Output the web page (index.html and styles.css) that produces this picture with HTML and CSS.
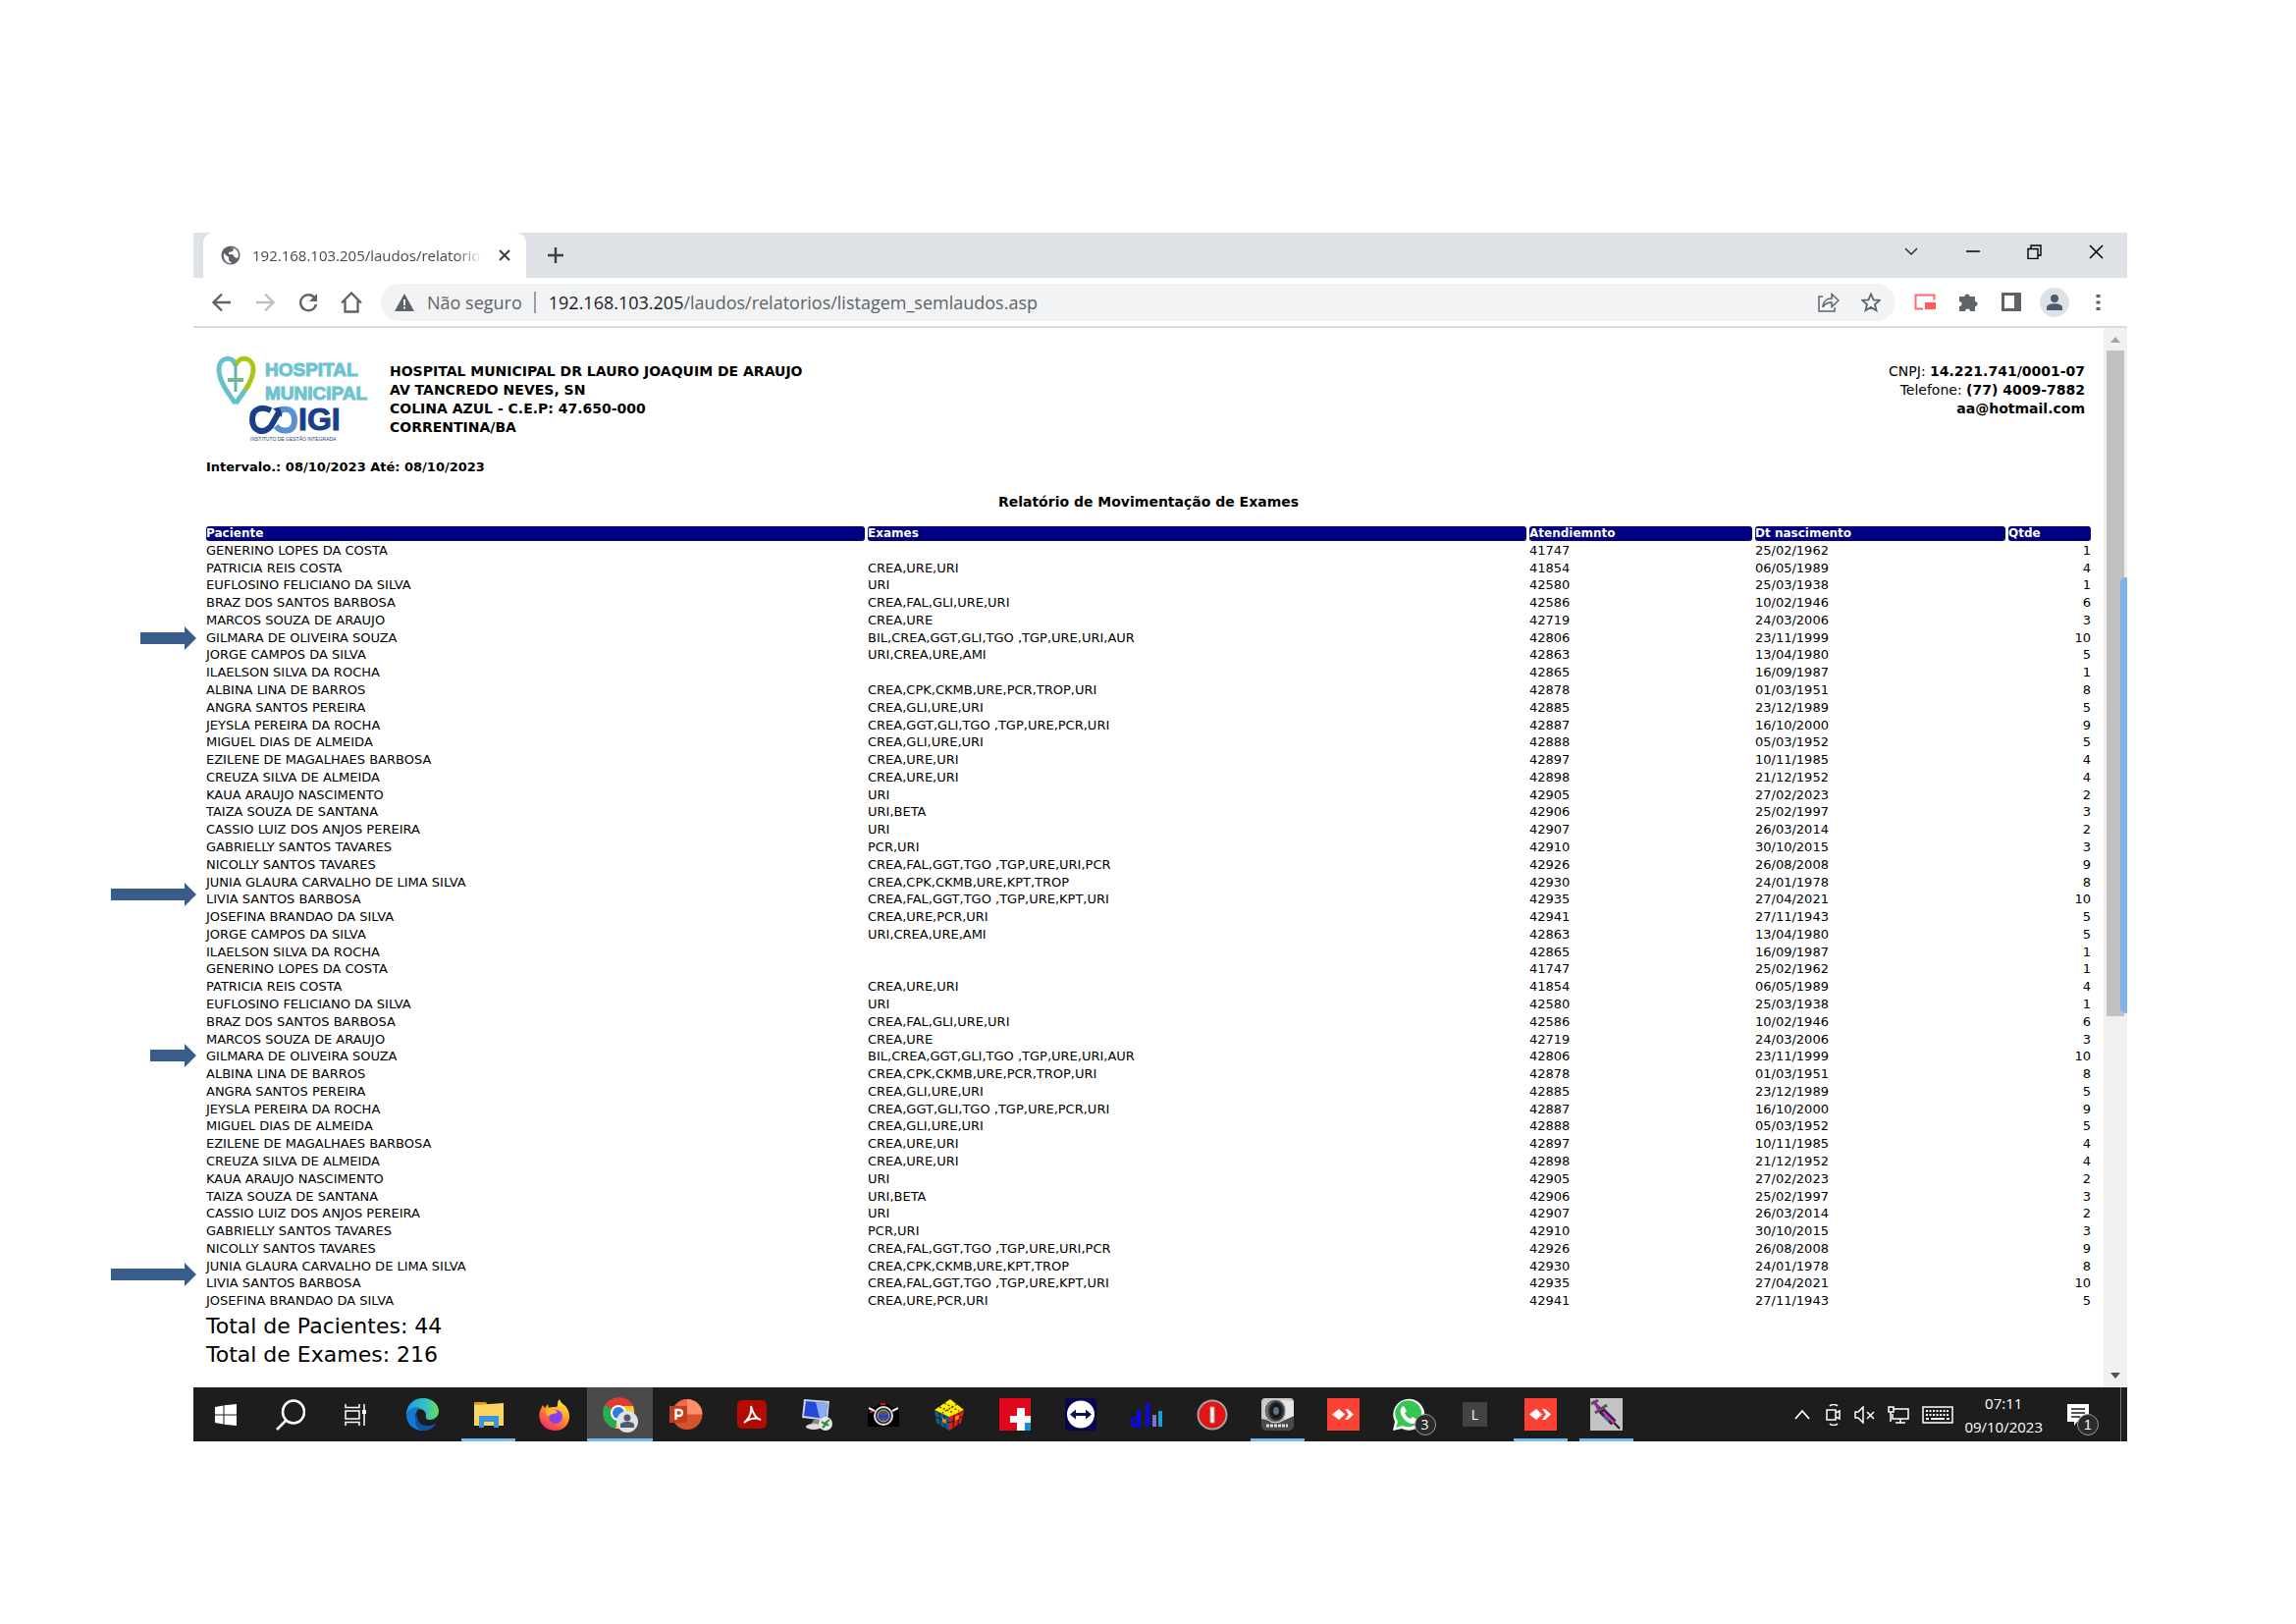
FILE: index.html
```html
<!DOCTYPE html>
<html lang="pt-BR">
<head>
<meta charset="utf-8">
<title>192.168.103.205/laudos/relatorios/listagem_semlaudos.asp</title>
<link rel="stylesheet" href="styles.css">
</head>
<body>
<main class="window">
  <div class="tabstrip">
    <div class="tab">
      <svg width="20" height="20" viewBox="0 0 20 20"><circle cx="10" cy="10" r="9.5" fill="#5f6368"/><path d="M3 8l5 4v3l3 3c-5 1-9-4-8-10zM9 2l4 1-1 3-4 1v2h4l2 3 3 1c3-6-2-11-8-11z" fill="#fff"/></svg>
      <span class="tab-title">192.168.103.205/laudos/relatorio</span>
      <button class="icon-btn tab-close" aria-label="Fechar guia"><svg width="12" height="12" viewBox="0 0 12 12"><path d="M1 1l10 10M11 1L1 11" stroke="#3c4043" stroke-width="2"/></svg></button>
    </div>
    <button class="icon-btn new-tab" aria-label="Nova guia"><svg width="16" height="16" viewBox="0 0 16 16"><path d="M8 0v16M0 8h16" stroke="#3c4043" stroke-width="2.4"/></svg></button>
    <div class="controls">
      <button class="icon-btn" aria-label="Pesquisar guias"><svg width="14" height="10" viewBox="0 0 14 10"><path d="M1 2l6 6 6-6" fill="none" stroke="#333" stroke-width="1.5"/></svg></button>
      <button class="icon-btn" aria-label="Minimizar"><svg width="14" height="4" viewBox="0 0 14 4"><path d="M0 2h14" stroke="#000" stroke-width="1.5"/></svg></button>
      <button class="icon-btn" aria-label="Restaurar"><svg width="15" height="15" viewBox="0 0 15 15"><path d="M1 4.500h10v10H1zM4 4V1h10v10h-3" fill="none" stroke="#000" stroke-width="1.400"/></svg></button>
      <button class="icon-btn" aria-label="Fechar"><svg width="15" height="15" viewBox="0 0 15 15"><path d="M1 1l13 13M14 1L1 14" stroke="#000" stroke-width="1.500"/></svg></button>
    </div>
  </div>

  <div class="toolbar">
    <div class="nav">
      <button class="icon-btn" aria-label="Voltar"><svg width="20" height="20" viewBox="0 0 20 20"><path d="M19 10H2M10 1.500L1.500 10 10 18.500" fill="none" stroke="#5f6368" stroke-width="2.400"/></svg></button>
      <button class="icon-btn" aria-label="Avançar"><svg width="20" height="20" viewBox="0 0 20 20"><path d="M1 10h17M10 1.500l8.500 8.500L10 18.500" fill="none" stroke="#bdbec0" stroke-width="2.400"/></svg></button>
      <button class="icon-btn" aria-label="Recarregar"><svg width="20" height="20" viewBox="0 0 20 20"><path d="M17 6A8 8 0 1 0 18 12" fill="none" stroke="#5f6368" stroke-width="2.400"/><path d="M19 1v8h-8z" fill="#5f6368"/></svg></button>
      <button class="icon-btn" aria-label="Página inicial"><svg width="22" height="22" viewBox="0 0 22 22"><path d="M1 11.500L11 1.500l10 10M4.500 9v11.500h13V9" fill="none" stroke="#5f6368" stroke-width="2.300"/></svg></button>
    </div>
    <div class="omnibox">
      <svg width="20" height="18" viewBox="0 0 20 18"><path d="M10 0l10 18H0z" fill="#5f6368"/><path d="M10 6v6M10 13.500v2" stroke="#fff" stroke-width="1.800"/></svg>
      <span class="insecure">Não seguro</span>
      <span class="url"><b>192.168.103.205</b>/laudos/relatorios/listagem_semlaudos.asp</span>
      <button class="icon-btn" aria-label="Compartilhar"><svg width="22" height="20" viewBox="0 0 22 20"><path d="M5 4H1v15h16v-4" fill="none" stroke="#5f6368" stroke-width="1.500"/><path d="M5 15c0-6 4-9 9-9V1.500l7 6.500-7 6.500V10c-4 0-7 1-9 5z" fill="none" stroke="#5f6368" stroke-width="1.500"/></svg></button>
      <button class="icon-btn" aria-label="Favoritos"><svg width="20" height="20" viewBox="0 0 20 20"><path d="M10 1.500l2.500 5.800 6.300.6-4.800 4.100 1.500 6.200L10 14.900l-5.500 3.300L6 12 1.200 7.900l6.300-.6z" fill="none" stroke="#5f6368" stroke-width="1.800"/></svg></button>
    </div>
    <div class="extensions">
      <button class="icon-btn" aria-label="Picture in picture"><svg width="22" height="17" viewBox="0 0 22 17"><path d="M9 15.500H1.500v-14h19v5" fill="none" stroke="#ff6b68" stroke-width="2"/><path d="M11 9h11v7H11z" fill="#ff5b57"/></svg></button>
      <button class="icon-btn" aria-label="Extensões"><svg width="20" height="20" viewBox="0 0 20 20"><path d="M1 4h5.500a2.500 2.500 0 1 1 5 0H17v5a2.500 2.500 0 1 1 0 5v5h-5a2.500 2.500 0 1 0-5 0H1v-5a2.500 2.500 0 1 0 0-5z" fill="#5f6368"/></svg></button>
      <button class="icon-btn" aria-label="Painel lateral"><svg width="20" height="19" viewBox="0 0 20 19"><path d="M0 0h20v19H0zM3 3v13h10V3z" fill="#5f6368" fill-rule="evenodd"/></svg></button>
      <button class="icon-btn" aria-label="Perfil"><svg width="30" height="30" viewBox="0 0 30 30"><circle cx="15" cy="15" r="15" fill="#dee1e6"/><circle cx="15" cy="11" r="4" fill="#4e5a6e"/><path d="M7 23v-3c0-5 16-5 16 0v3z" fill="#4e5a6e"/></svg></button>
      <button class="icon-btn" aria-label="Menu"><svg width="5" height="18" viewBox="0 0 5 18"><path d="M.5 1h4v3h-4zM.5 7.500h4v3h-4zM.5 14h4v3h-4z" fill="#5f6368"/></svg></button>
    </div>
  </div>

  <div class="viewport">
    <article class="report">
      <header class="report-head">
        <svg class="logo" width="156" height="92" viewBox="0 0 156 92" role="img" aria-label="Hospital Municipal IGI">
          <path d="M20 49C12 38 3 26 3 14 3 2 17-1 20 10" fill="none" stroke="#69bfcc" stroke-width="5"/>
          <path d="M20 10C24-1 38 2 38 14c0 8-4 15-8 21" fill="none" stroke="#a9c712" stroke-width="5"/>
          <path d="M30 35L20 49" stroke="#69bfcc" stroke-width="5"/>
          <path d="M20 8v29" stroke="#5fb5ad" stroke-width="3"/><path d="M12 25h16" stroke="#6fb98c" stroke-width="4"/>
          <text class="logo-name" x="50" y="21">HOSPITAL</text>
          <text class="logo-name" x="50" y="45">MUNICIPAL</text>
          <path d="M56 56c-8-4-19-3-19 9s11 16 19 7l8-14" fill="none" stroke="#1b3f86" stroke-width="6"/>
          <path d="M58 54l10-2-1 11z" fill="#1b3f86"/>
          <path d="M61 72c5 6 19 8 19-6 0-10-7-13-14-10" fill="none" stroke="#5b90d3" stroke-width="6"/>
          <text class="logo-igi" x="84" y="76">IGI</text>
          <text class="logo-sub" x="35" y="87">INSTITUTO DE GESTÃO INTEGRADA</text>
        </svg>
        <address class="org">HOSPITAL MUNICIPAL DR LAURO JOAQUIM DE ARAUJO<br>AV TANCREDO NEVES, SN<br>COLINA AZUL - C.E.P: 47.650-000<br>CORRENTINA/BA</address>
        <address class="contact">CNPJ: <b>14.221.741/0001-07</b><br>Telefone: <b>(77) 4009-7882</b><br><b>aa@hotmail.com</b></address>
      </header>
      <p class="range">Intervalo.: 08/10/2023 Até: 08/10/2023</p>
      <h1 class="title">Relatório de Movimentação de Exames</h1>
      <table class="exams">
        <colgroup><col><col><col class="c-att"><col class="c-birth"><col class="c-qty"></colgroup>
        <thead><tr><th>Paciente</th><th>Exames</th><th>Atendiemnto</th><th>Dt nascimento</th><th>Qtde</th></tr></thead>
        <tbody>
          <tr><td>GENERINO LOPES DA COSTA</td><td></td><td>41747</td><td>25/02/1962</td><td>1</td></tr>
          <tr><td>PATRICIA REIS COSTA</td><td>CREA,URE,URI</td><td>41854</td><td>06/05/1989</td><td>4</td></tr>
          <tr><td>EUFLOSINO FELICIANO DA SILVA</td><td>URI</td><td>42580</td><td>25/03/1938</td><td>1</td></tr>
          <tr><td>BRAZ DOS SANTOS BARBOSA</td><td>CREA,FAL,GLI,URE,URI</td><td>42586</td><td>10/02/1946</td><td>6</td></tr>
          <tr><td>MARCOS SOUZA DE ARAUJO</td><td>CREA,URE</td><td>42719</td><td>24/03/2006</td><td>3</td></tr>
          <tr><td>GILMARA DE OLIVEIRA SOUZA</td><td>BIL,CREA,GGT,GLI,TGO ,TGP,URE,URI,AUR</td><td>42806</td><td>23/11/1999</td><td>10</td></tr>
          <tr><td>JORGE CAMPOS DA SILVA</td><td>URI,CREA,URE,AMI</td><td>42863</td><td>13/04/1980</td><td>5</td></tr>
          <tr><td>ILAELSON SILVA DA ROCHA</td><td></td><td>42865</td><td>16/09/1987</td><td>1</td></tr>
          <tr><td>ALBINA LINA DE BARROS</td><td>CREA,CPK,CKMB,URE,PCR,TROP,URI</td><td>42878</td><td>01/03/1951</td><td>8</td></tr>
          <tr><td>ANGRA SANTOS PEREIRA</td><td>CREA,GLI,URE,URI</td><td>42885</td><td>23/12/1989</td><td>5</td></tr>
          <tr><td>JEYSLA PEREIRA DA ROCHA</td><td>CREA,GGT,GLI,TGO ,TGP,URE,PCR,URI</td><td>42887</td><td>16/10/2000</td><td>9</td></tr>
          <tr><td>MIGUEL DIAS DE ALMEIDA</td><td>CREA,GLI,URE,URI</td><td>42888</td><td>05/03/1952</td><td>5</td></tr>
          <tr><td>EZILENE DE MAGALHAES BARBOSA</td><td>CREA,URE,URI</td><td>42897</td><td>10/11/1985</td><td>4</td></tr>
          <tr><td>CREUZA SILVA DE ALMEIDA</td><td>CREA,URE,URI</td><td>42898</td><td>21/12/1952</td><td>4</td></tr>
          <tr><td>KAUA ARAUJO NASCIMENTO</td><td>URI</td><td>42905</td><td>27/02/2023</td><td>2</td></tr>
          <tr><td>TAIZA SOUZA DE SANTANA</td><td>URI,BETA</td><td>42906</td><td>25/02/1997</td><td>3</td></tr>
          <tr><td>CASSIO LUIZ DOS ANJOS PEREIRA</td><td>URI</td><td>42907</td><td>26/03/2014</td><td>2</td></tr>
          <tr><td>GABRIELLY SANTOS TAVARES</td><td>PCR,URI</td><td>42910</td><td>30/10/2015</td><td>3</td></tr>
          <tr><td>NICOLLY SANTOS TAVARES</td><td>CREA,FAL,GGT,TGO ,TGP,URE,URI,PCR</td><td>42926</td><td>26/08/2008</td><td>9</td></tr>
          <tr><td>JUNIA GLAURA CARVALHO DE LIMA SILVA</td><td>CREA,CPK,CKMB,URE,KPT,TROP</td><td>42930</td><td>24/01/1978</td><td>8</td></tr>
          <tr><td>LIVIA SANTOS BARBOSA</td><td>CREA,FAL,GGT,TGO ,TGP,URE,KPT,URI</td><td>42935</td><td>27/04/2021</td><td>10</td></tr>
          <tr><td>JOSEFINA BRANDAO DA SILVA</td><td>CREA,URE,PCR,URI</td><td>42941</td><td>27/11/1943</td><td>5</td></tr>
          <tr><td>JORGE CAMPOS DA SILVA</td><td>URI,CREA,URE,AMI</td><td>42863</td><td>13/04/1980</td><td>5</td></tr>
          <tr><td>ILAELSON SILVA DA ROCHA</td><td></td><td>42865</td><td>16/09/1987</td><td>1</td></tr>
          <tr><td>GENERINO LOPES DA COSTA</td><td></td><td>41747</td><td>25/02/1962</td><td>1</td></tr>
          <tr><td>PATRICIA REIS COSTA</td><td>CREA,URE,URI</td><td>41854</td><td>06/05/1989</td><td>4</td></tr>
          <tr><td>EUFLOSINO FELICIANO DA SILVA</td><td>URI</td><td>42580</td><td>25/03/1938</td><td>1</td></tr>
          <tr><td>BRAZ DOS SANTOS BARBOSA</td><td>CREA,FAL,GLI,URE,URI</td><td>42586</td><td>10/02/1946</td><td>6</td></tr>
          <tr><td>MARCOS SOUZA DE ARAUJO</td><td>CREA,URE</td><td>42719</td><td>24/03/2006</td><td>3</td></tr>
          <tr><td>GILMARA DE OLIVEIRA SOUZA</td><td>BIL,CREA,GGT,GLI,TGO ,TGP,URE,URI,AUR</td><td>42806</td><td>23/11/1999</td><td>10</td></tr>
          <tr><td>ALBINA LINA DE BARROS</td><td>CREA,CPK,CKMB,URE,PCR,TROP,URI</td><td>42878</td><td>01/03/1951</td><td>8</td></tr>
          <tr><td>ANGRA SANTOS PEREIRA</td><td>CREA,GLI,URE,URI</td><td>42885</td><td>23/12/1989</td><td>5</td></tr>
          <tr><td>JEYSLA PEREIRA DA ROCHA</td><td>CREA,GGT,GLI,TGO ,TGP,URE,PCR,URI</td><td>42887</td><td>16/10/2000</td><td>9</td></tr>
          <tr><td>MIGUEL DIAS DE ALMEIDA</td><td>CREA,GLI,URE,URI</td><td>42888</td><td>05/03/1952</td><td>5</td></tr>
          <tr><td>EZILENE DE MAGALHAES BARBOSA</td><td>CREA,URE,URI</td><td>42897</td><td>10/11/1985</td><td>4</td></tr>
          <tr><td>CREUZA SILVA DE ALMEIDA</td><td>CREA,URE,URI</td><td>42898</td><td>21/12/1952</td><td>4</td></tr>
          <tr><td>KAUA ARAUJO NASCIMENTO</td><td>URI</td><td>42905</td><td>27/02/2023</td><td>2</td></tr>
          <tr><td>TAIZA SOUZA DE SANTANA</td><td>URI,BETA</td><td>42906</td><td>25/02/1997</td><td>3</td></tr>
          <tr><td>CASSIO LUIZ DOS ANJOS PEREIRA</td><td>URI</td><td>42907</td><td>26/03/2014</td><td>2</td></tr>
          <tr><td>GABRIELLY SANTOS TAVARES</td><td>PCR,URI</td><td>42910</td><td>30/10/2015</td><td>3</td></tr>
          <tr><td>NICOLLY SANTOS TAVARES</td><td>CREA,FAL,GGT,TGO ,TGP,URE,URI,PCR</td><td>42926</td><td>26/08/2008</td><td>9</td></tr>
          <tr><td>JUNIA GLAURA CARVALHO DE LIMA SILVA</td><td>CREA,CPK,CKMB,URE,KPT,TROP</td><td>42930</td><td>24/01/1978</td><td>8</td></tr>
          <tr><td>LIVIA SANTOS BARBOSA</td><td>CREA,FAL,GGT,TGO ,TGP,URE,KPT,URI</td><td>42935</td><td>27/04/2021</td><td>10</td></tr>
          <tr><td>JOSEFINA BRANDAO DA SILVA</td><td>CREA,URE,PCR,URI</td><td>42941</td><td>27/11/1943</td><td>5</td></tr>
        </tbody>
      </table>
      <p class="totals">Total de Pacientes: 44<br>Total de Exames: 216</p>
    </article>
    <div class="scrollbar">
      <svg width="10" height="6" viewBox="0 0 10 6"><path d="M5 0l5 6H0z" fill="#a3a3a3"/></svg>
      <div class="thumb"></div>
      <svg class="down" width="10" height="6" viewBox="0 0 10 6"><path d="M5 6l5-6H0z" fill="#505050"/></svg>
    </div>
    <div class="edge-handle"></div>
  </div>

  <footer class="taskbar">
    <div class="system">
      <button class="task" aria-label="Iniciar"><svg width="22" height="22" viewBox="0 0 22 22"><path d="M0 3l8.500-1.500v9H0zM9.500 1.300L22 0v10.500H9.500zM0 11.500h8.500v9L0 19zM9.500 11.500H22V22L9.500 20.700z" fill="#fff"/></svg></button>
      <button class="task" aria-label="Pesquisar"><svg width="30" height="32" viewBox="0 0 30 32"><ellipse cx="18" cy="13" rx="11" ry="11.500" fill="none" stroke="#fff" stroke-width="2.500"/><path d="M10.500 21.500L1 31" stroke="#fff" stroke-width="2.500"/></svg></button>
      <button class="task" aria-label="Visão de tarefas"><svg width="22" height="22" viewBox="0 0 22 22"><path d="M1 0v3.500h14V0M1 22v-3.500h14V22M1 7h14v8H1zM20 0v22" fill="none" stroke="#fff" stroke-width="1.500"/><path d="M18 6h4v4h-4z" fill="#fff"/></svg></button>
    </div>
    <div class="apps">
      <button class="task" aria-label="Edge"><svg width="33" height="33" viewBox="0 0 33 33"><defs><linearGradient id="ed" x1="0" x2="1"><stop offset="0" stop-color="#1b9de2"/><stop offset=".6" stop-color="#35c1c4"/><stop offset="1" stop-color="#6bdf4b"/></linearGradient></defs><path d="M0 17C0 6 8 0 17 0c10 0 16 7 16 13 0 6-5 9-9 9-3 0-5-1-4-4 1-6-8-10-15-5-3 2-5 4-5 4z" fill="url(#ed)"/><path d="M0 17c2-7 9-9 14-7-5 3-6 9-3 14 4 6 12 6 19 2-3 5-8 7-13 7C7 33 0 26 0 17z" fill="#0f7bd4"/><path d="M12 15c-2 3-1 9 4 12 5 2 10 1 14-1-3 5-8 7-12 7-8-1-12-9-6-18z" fill="#10529f"/></svg></button>
      <button class="task open" aria-label="Explorador de arquivos"><svg width="30" height="26" viewBox="0 0 30 26"><path d="M0 0h12l2 3h-14z" fill="#e09a0b"/><path d="M0 3l30-2v23H0z" fill="#fcd462"/><path d="M5 14h20v12h-5v-6H10v6H5z" fill="#3a95dd"/></svg></button>
      <button class="task" aria-label="Firefox"><svg width="32" height="32" viewBox="0 0 32 32"><defs><linearGradient id="ff" x1=".8" y1="0" x2=".2" y2="1"><stop offset="0" stop-color="#fff14a"/><stop offset=".45" stop-color="#ff9426"/><stop offset="1" stop-color="#f6206c"/></linearGradient></defs><path d="M21 0c1 4 4 5 6 7 8 9 4 25-11 25C4 32-3 20 2 10l2-4 2 3 3-4 1 4c3-2 7 0 9-2 0-3 0-5 2-7z" fill="url(#ff)"/><circle cx="17" cy="18" r="7" fill="#8a3ff0"/><path d="M8 9c5-1 8 2 11 4-3 3-8 1-9 5-3-3-4-6-2-9z" fill="#ffb52b"/></svg></button>
      <button class="task open active" aria-label="Chrome"><svg width="36" height="36" viewBox="0 0 36 36"><path d="M16 16L2 8C9-3 27-2 31 9z" fill="#e33b2e"/><path d="M16 16L2 8c-5 9 0 22 11 24z" fill="#2da94f"/><path d="M16 16l-3 16C28 33 35 20 31 9H16z" fill="#fcc934"/><circle cx="16" cy="16" r="8" fill="#fff"/><circle cx="16" cy="16" r="6" fill="#2f7ae5"/><circle cx="25" cy="25" r="11" fill="#dee1e6"/><circle cx="25" cy="21" r="3.500" fill="#4e5a6e"/><path d="M18 31v-3c0-4 14-4 14 0v3z" fill="#4e5a6e"/></svg></button>
      <button class="task" aria-label="PowerPoint"><svg width="34" height="31" viewBox="0 0 34 31"><circle cx="18" cy="15.500" r="15.500" fill="#d35230"/><path d="M18 0a15.500 15.500 0 0 1 15.500 15.500H18z" fill="#ff8f6b"/><path d="M18 0v15.500H3A15.500 15.500 0 0 1 18 0z" fill="#ed6c47"/><path d="M0 7h18v17H0z" fill="#c43e1c"/><path d="M6.500 21V11h3.500a3 3 0 0 1 0 6H6.500" fill="none" stroke="#fff" stroke-width="2.400"/></svg></button>
      <button class="task" aria-label="Acrobat"><svg width="30" height="29" viewBox="0 0 30 29"><rect width="30" height="29" rx="5" fill="#b30b00"/><path d="M7 23c5-4 8-10 7-17 2 8 6 13 10 14-6-3-12-1-17 3z" fill="none" stroke="#fff" stroke-width="2"/></svg></button>
      <button class="task" aria-label="Computador remoto"><svg width="32" height="32" viewBox="0 0 32 32"><path d="M2 0l26 2-2 20L0 19z" fill="#c8d3dd"/><path d="M4 2l22 2-2 16L2 17z" fill="#2548d8"/><path d="M14 3l12 1-2 16-6-1z" fill="#8cabf0"/><path d="M12 21h7v6H8z" fill="#888"/><ellipse cx="12" cy="28" rx="8" ry="3" fill="#ddd"/><circle cx="24" cy="25" r="7" fill="#e5e9e5"/><path d="M20 23l4 3-3 3M28 21l-4 3 3 3" fill="none" stroke="#268b3a" stroke-width="2"/></svg></button>
      <button class="task" aria-label="Câmera"><svg width="32" height="24" viewBox="0 0 32 24"><path d="M0 4h9l3-3h9l3 3h8v20H0z" fill="#000"/><circle cx="16" cy="13" r="9" fill="#222" stroke="#ddd" stroke-width="2"/><circle cx="16" cy="13" r="6" fill="#555" stroke="#bbb"/><path d="M11 11l5 2 5-2v5l-5-2-5 2z" fill="#1538ff"/><path d="M1 5l6 3M31 5l-6 3" stroke="#eee" stroke-width="2"/><path d="M13 1h5M2 9h3" stroke="#d11" stroke-width="2"/></svg></button>
      <button class="task" aria-label="Cubo"><svg width="32" height="32" viewBox="0 0 32 32"><path d="M1 12l15 5v15L3 24z" fill="#10608e"/><path d="M31 12l-15 5v15l12-8z" fill="#e11b17"/><path d="M17 0l14 11-15 7L1 11z" fill="#ffef00"/><path d="M6 8l15 6M11 4l15 8M24 5L9 14" stroke="#5a5200" stroke-width="1.500" stroke-dasharray="2 2" fill="none"/><path d="M2 18l14 6 13-6M6 14l1 12M11 16l1 13M21 16l-1 13M26 14l-1 12" stroke="#1a1a1a" fill="none"/><path d="M9 19l4 2v4l-4-2zM22 18l4-2v4l-4 2z" fill="#f08a18"/></svg></button>
      <button class="task" aria-label="Saúde"><svg width="32" height="33" viewBox="0 0 32 33"><path d="M0 0h32v33H0z" fill="#e2071c"/><path d="M26 25h6v8h-6z" fill="#168cd0"/><path d="M18 10h8v8h6v7h-6v8h-8v-8h-7v-7h7z" fill="#fff"/></svg></button>
      <button class="task" aria-label="TeamViewer"><svg width="32" height="33" viewBox="0 0 32 33"><rect width="32" height="33" rx="4" fill="#050552"/><ellipse cx="16" cy="16.500" rx="14" ry="14" fill="#fff"/><path d="M5 16.500l6-5v3.500h10v-3.500l6 5-6 5V18H11v3.500z" fill="#0a1256"/></svg></button>
      <button class="task" aria-label="Gráficos"><svg width="32" height="26" viewBox="0 0 32 26"><path d="M8 8v18M17 1v24" stroke="#0909f0" stroke-width="4"/><circle cx="5" cy="20" r="4" fill="none" stroke="#0909f0" stroke-width="3"/><path d="M24 13v12" stroke="#7977c9" stroke-width="4"/><path d="M30 9v16" stroke="#16a1d8" stroke-width="4"/></svg></button>
      <button class="task" aria-label="Energia"><svg width="32" height="32" viewBox="0 0 32 32"><circle cx="16" cy="16" r="14.500" fill="#e31414" stroke="#a3a3a3" stroke-width="2"/><path d="M14 8h4v16h-4z" fill="#fff" stroke="#c99" /></svg></button>
      <button class="task open" aria-label="Webcam"><svg width="33" height="33" viewBox="0 0 33 33"><rect width="33" height="33" rx="5" fill="#4a4a4a"/><path d="M0 4q0-4 4-4h25q4 0 4 4v14L18 25 0 21z" fill="#c9c9c9"/><path d="M20 2l13 1v15l-9 4z" fill="#e6e6e6"/><ellipse cx="14" cy="13" rx="11" ry="12" fill="#6a6a6a" stroke="#ddd"/><ellipse cx="15" cy="13" rx="7" ry="9" fill="#15191c" stroke="#333" stroke-width="2"/><ellipse cx="15" cy="13" rx="3" ry="4" fill="#60717c"/><path d="M5 28h22" stroke="#ddd" stroke-width="3" stroke-dasharray="3 1"/></svg></button>
      <button class="task" aria-label="AnyDesk"><svg width="33" height="33" viewBox="0 0 33 33"><path d="M0 0h33v33H0z" fill="#fb4235"/><path d="M12 11l6 5.500-6 5.500-7-5.500zM18 11h3l6 5.500-6 5.500h-3l4-5.500z" fill="#fff"/></svg></button>
      <button class="task" aria-label="WhatsApp"><svg width="33" height="33" viewBox="0 0 33 33"><path d="M0 33l2-9a16 16 0 1 1 7 7z" fill="#fff"/><path d="M3 30l2-6a13.500 13.500 0 1 1 5 4z" fill="#38c553"/><path d="M11 8l3 5-2 2c1 3 3 5 6 6l2-2 5 3c-2 7-10 4-14-1S6 10 11 8z" fill="#fff"/></svg><span class="badge">3</span></button>
      <button class="task" aria-label="L"><span class="letter">L</span></button>
      <button class="task open" aria-label="AnyDesk sessão"><svg width="33" height="33" viewBox="0 0 33 33"><path d="M0 0h33v33H0z" fill="#fb4235"/><path d="M12 11l6 5.500-6 5.500-7-5.500zM18 11h3l6 5.500-6 5.500h-3l4-5.500z" fill="#fff"/></svg></button>
      <button class="task open" aria-label="Laboratório"><svg width="33" height="33" viewBox="0 0 33 33"><path d="M0 0h33v33H0z" fill="#c3c3c3"/><path d="M3 3l27 28" stroke="#222" stroke-width="2"/><path d="M11 12l13 13" stroke="#3a1d4d" stroke-width="7"/><path d="M13 14l11 11" stroke="#e03aa8" stroke-width="2"/><path d="M14 18l5 5" stroke="#2b6fc0" stroke-width="2"/><path d="M5 15l12-8M1 6l7-4" stroke="#555" stroke-width="3"/><path d="M4 3l5 9" stroke="#a520a5" stroke-width="3"/></svg></button>
    </div>
    <div class="tray">
      <button class="icon-btn" aria-label="Ícones ocultos"><svg width="16" height="11" viewBox="0 0 16 11"><path d="M1 10l7-8 7 8" fill="none" stroke="#fff" stroke-width="1.800"/></svg></button>
      <button class="icon-btn" aria-label="Reunir"><svg width="16" height="22" viewBox="0 0 16 22"><path d="M4 2c2-2 6-2 8 0M4 20c2 2 6 2 8 0M1 6h9v10H1zM10 9l4-2v8l-4-2" fill="none" stroke="#fff" stroke-width="1.500"/></svg></button>
      <button class="icon-btn" aria-label="Volume"><svg width="21" height="18" viewBox="0 0 21 18"><path d="M1 6h3l5-5v16l-5-5H1zM13 6l7 7M20 6l-7 7" fill="none" stroke="#fff" stroke-width="1.500"/></svg></button>
      <button class="icon-btn" aria-label="Rede"><svg width="22" height="18" viewBox="0 0 22 18"><path d="M6 3h15v10H5V8M13 13v4M8 17h10M1 1h5v5H1zM3 6v10" fill="none" stroke="#fff" stroke-width="1.500"/></svg></button>
      <button class="icon-btn" aria-label="Teclado"><svg width="32" height="18" viewBox="0 0 32 18"><path d="M1 1h30v16H1z" fill="none" stroke="#fff" stroke-width="1.500"/><path d="M4 5h24M4 9h24" stroke="#fff" stroke-width="2" stroke-dasharray="2 1.500"/><path d="M4 13h3M9 13h14M25 13h3" stroke="#fff" stroke-width="2"/></svg></button>
      <time class="clock">07:11<br>09/10/2023</time>
      <button class="icon-btn notif" aria-label="Notificações"><svg width="22" height="22" viewBox="0 0 22 22"><path d="M0 0h22v18H10l-3 4v-4H0z" fill="#fff"/><path d="M4 5h14M4 9h14M4 13h9" stroke="#1d1d1d" stroke-width="1.500"/></svg><span class="badge">1</span></button>
    </div>
  </footer>

  <svg class="arrow" style="top:401px" width="57" height="24" viewBox="0 0 57 24"><path d="M0 6h45V0l12 12-12 12v-6H0z"/></svg>
  <svg class="arrow" style="top:662px" width="87" height="24" viewBox="0 0 87 24"><path d="M0 6h75V0l12 12-12 12v-6H0z"/></svg>
  <svg class="arrow" style="top:826px" width="47" height="24" viewBox="0 0 47 24"><path d="M0 6h35V0l12 12-12 12v-6H0z"/></svg>
  <svg class="arrow" style="top:1049px" width="87" height="24" viewBox="0 0 87 24"><path d="M0 6h75V0l12 12-12 12v-6H0z"/></svg>
</main>
</body>
</html>
```

FILE: styles.css
```css
* { box-sizing: border-box; }
body { margin: 0; padding: 237px 172px 186px 197px; background: #fff; color: #000; font-family: "DejaVu Sans", Verdana, sans-serif; }
svg { display: block; flex: none; }
.window { position: relative; }
.icon-btn { display: flex; align-items: center; justify-content: center; border: 0; padding: 0; background: none; }

.tabstrip { display: flex; align-items: center; height: 46px; background: #dee1e6; font-family: "Open Sans", sans-serif; }
.tab { display: flex; align-items: center; align-self: stretch; width: 329px; margin-left: 10px; padding: 0 16px 0 18px; background: #fff; border-radius: 10px 10px 0 0; }
.tab-title { flex: 1; margin-left: 12px; white-space: nowrap; font-size: 15px; color: #45494d; -webkit-mask-image: linear-gradient(90deg, #000 88%, transparent); mask-image: linear-gradient(90deg, #000 88%, transparent); }
.tab-close { width: 12px; margin-left: 16px; }
.new-tab { margin-left: 22px; }
.controls { display: grid; grid-template-columns: repeat(4, 63px); align-self: flex-start; height: 38px; margin-left: auto; }

.toolbar { display: flex; align-items: center; height: 51px; padding-right: 8px; border-bottom: 2px solid #dadbdd; font-family: "Open Sans", sans-serif; }
.nav { display: grid; grid-template-columns: repeat(4, 44px); margin-left: 7px; }
.omnibox { display: flex; align-items: center; flex: 1; height: 38px; margin-left: 8px; padding: 0 14px; border-radius: 19px; background: #f1f3f4; font-size: 18px; color: #5f6368; }
.insecure { margin-left: 13px; padding-right: 12px; border-right: 2px solid #9a9da1; line-height: 22px; }
.url { flex: 1; margin-left: 13px; }
.url b { font-weight: 400; color: #202124; }
.omnibox .icon-btn { width: 22px; margin-left: 21px; }
.extensions { display: grid; grid-template-columns: repeat(5, 44px); margin-left: 8px; }

.viewport { display: flex; position: relative; }
.report { flex: 1; padding: 28px 10px 19px; }
.report-head { display: flex; padding: 0 9px 0 13px; font-size: 14px; line-height: 19px; }
.logo { margin-right: 21px; }
.logo-name { font: bold 19px "Liberation Sans", sans-serif; fill: #6ec3d0; stroke: #6ec3d0; }
.logo-igi { font: bold 32px "Liberation Sans", sans-serif; fill: #1b3f86; stroke: #1b3f86; }
.logo-sub { font: 5px "Liberation Sans", sans-serif; fill: #27407c; }
.org, .contact { margin-top: 7px; font-style: normal; }
.org { font-weight: 700; }
.contact { margin-left: auto; text-align: right; }
.range { margin: 13px 0 0 3px; font-size: 13px; line-height: 18px; font-weight: 700; }
.title { margin: 17px 0 16px; font-size: 14px; line-height: 18px; text-align: center; }
.exams { width: 100%; table-layout: fixed; border-spacing: 3px 0; font-size: 13px; }
.c-att { width: 227px; }
.c-birth { width: 255px; }
.c-qty { width: 84px; }
.exams th { height: 15px; padding: 0; border-radius: 3px; background: #000080; color: #fff; font-size: 12px; line-height: 15px; text-align: left; }
.exams td { padding: 1px 0 0; line-height: 16px; white-space: nowrap; }
.exams tbody tr { height: 18px; }
.exams tbody tr:nth-child(9n+3), .exams tbody tr:nth-child(9n+7) { height: 17px; }
.exams td:last-child { text-align: right; }
.totals { margin: 3px 0 0 3px; font-size: 22px; line-height: 29px; }

.scrollbar { display: flex; flex-direction: column; align-items: center; width: 24px; padding: 9px 0; background: #f1f1f1; }
.thumb { width: 18px; height: 678px; margin-top: 8px; background: #c1c1c1; }
.down { margin-top: auto; }
.edge-handle { position: absolute; right: 0; top: 254px; width: 7px; height: 444px; background: #7fb2ea; border-radius: 6px 0 0 6px; }

.taskbar { display: flex; align-items: stretch; height: 55px; background: #1d1d1d; color: #fff; font-family: "Open Sans", sans-serif; }
.system { display: grid; grid-template-columns: repeat(3, 66px); }
.apps { display: grid; grid-template-columns: repeat(19, 67px); margin-left: 2px; }
.task { display: flex; align-items: center; justify-content: center; position: relative; margin: 0; padding: 0; border: 0; background: none; color: #fff; font-family: inherit; }
.open { margin: 0 6px; border-bottom: 3px solid #76b9ed; padding-top: 3px; }
.active { margin: 0; background: #4a4a4a; }
.badge { position: absolute; left: 50%; bottom: 6px; width: 22px; height: 22px; margin-left: 5px; border: 1px solid #999; border-radius: 50%; background: #2b2b2b; color: #fff; font-size: 14px; line-height: 20px; text-align: center; }
.letter { width: 25px; height: 25px; background: #434343; font-size: 14px; line-height: 25px; }
.tray { display: flex; align-items: center; gap: 13px; margin-left: auto; padding-right: 6px; border-right: 1px solid #777; margin-right: 6px; }
.tray .icon-btn:first-child { margin-right: 3px; }
.clock { margin: 0 12px 0 -2px; font-size: 15px; line-height: 24px; text-align: center; }
.notif { position: relative; margin-right: 26px; }
.notif .badge { left: 0; bottom: -10px; margin-left: 10px; }

.arrow { position: absolute; right: 100%; margin-right: -3px; fill: #385d8a; }
```
